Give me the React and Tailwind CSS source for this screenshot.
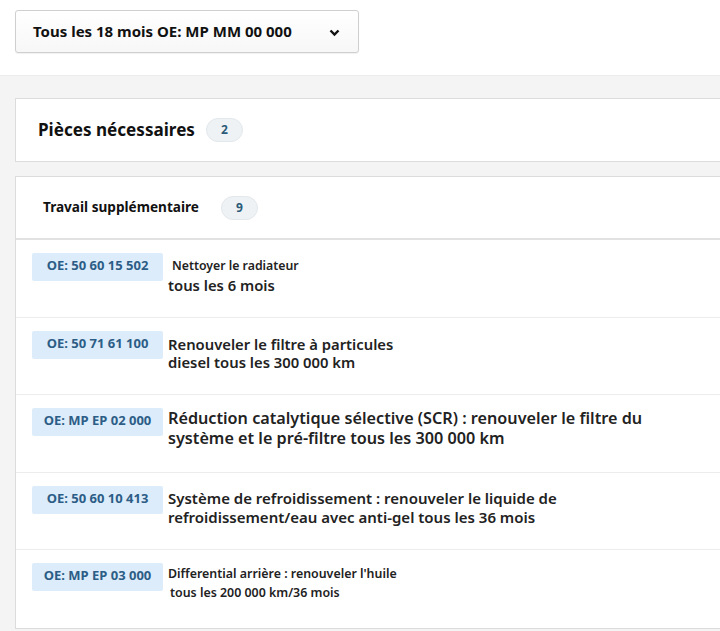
import React from 'react';

const tasks = [
  {
    code: 'OE: 50 60 15 502',
    lines: [
      { text: 'Nettoyer le radiateur', cls: 'text-[12.3px] font-semibold pl-[4px] leading-[18px] pt-[4px]' },
      { text: 'tous les 6 mois', cls: 'text-[14.8px] font-semibold leading-[20px]' },
    ],
  },
  {
    code: 'OE: 50 71 61 100',
    lines: [
      { text: 'Renouveler le filtre à particules', cls: 'text-[14.8px] font-semibold leading-[18px] pt-[4px]' },
      { text: 'diesel tous les 300 000 km', cls: 'text-[14.8px] font-semibold leading-[18px]' },
    ],
  },
  {
    code: 'OE: MP EP 02 000',
    lines: [
      { text: 'Réduction catalytique sélective (SCR) : renouveler le filtre du', cls: 'text-[16.2px] font-semibold leading-[20px]' },
      { text: 'système et le pré-filtre tous les 300 000 km', cls: 'text-[16.2px] font-semibold leading-[20px]' },
    ],
  },
  {
    code: 'OE: 50 60 10 413',
    lines: [
      { text: 'Système de refroidissement : renouveler le liquide de', cls: 'text-[15px] font-semibold leading-[19px] pt-[3px]' },
      { text: 'refroidissement/eau avec anti-gel tous les 36 mois', cls: 'text-[15px] font-semibold leading-[19px]' },
    ],
  },
  {
    code: 'OE: MP EP 03 000',
    lines: [
      { text: 'Differential arrière : renouveler l\'huile', cls: 'text-[12.4px] font-semibold leading-[17px] pt-[2px]' },
      { text: 'tous les 200 000 km/36 mois', cls: 'text-[12.4px] font-semibold leading-[22px] pl-[2px]' },
    ],
  },
];

const CountBadge = ({ n }) => (
  <span className="inline-flex items-center justify-center h-[24px] w-[37px] rounded-full bg-[#eef2f5] border border-[#e3e8ec] text-[12px] font-bold text-[#2c5a78]">
    {n}
  </span>
);

export default function App() {
  return (
    <div
      className="min-h-[631px] bg-white text-[#222]"
      style={{ fontFamily: '"Noto Sans", "Open Sans", sans-serif' }}
    >
      <div className="h-[75px] pt-[10px] pl-[15px]">
        <button className="flex items-center justify-between w-[344px] h-[43px] pl-[17px] pr-[18px] rounded-[3px] border border-[#cfcfcf] bg-gradient-to-b from-white to-[#f7f7f7] shadow-[0_1px_1px_rgba(0,0,0,0.06)]">
          <span className="text-[15px] font-bold text-[#111]">Tous les 18 mois OE: MP MM 00 000</span>
          <svg width="11" height="8" viewBox="0 0 11 8" className="mt-[2px]">
            <path d="M1.5 1.5 L5.5 5.5 L9.5 1.5" fill="none" stroke="#111" strokeWidth="2.4" />
          </svg>
        </button>
      </div>

      <div className="bg-[#f4f4f4] border-t border-[#ececec] pt-[22px] pl-[15px] pb-[4px]">
        <div className="bg-white border border-r-0 border-[#dcdcdc] h-[64px] flex items-center pl-[22px] gap-[11px]">
          <span className="text-[17.1px] font-bold text-[#111]">Pièces nécessaires</span>
          <CountBadge n={2} />
        </div>

        <div className="mt-[14px] bg-white border border-r-0 border-[#dcdcdc]">
          <div className="h-[63px] flex items-center pl-[27px] gap-[22px] border-b-2 border-[#e2e2e2]">
            <span className="text-[13.6px] font-bold text-[#111]">Travail supplémentaire</span>
            <CountBadge n={9} />
          </div>
          {tasks.map((t, i) => (
            <div
              key={t.code}
              className={`h-[77.5px] flex items-start pl-[16px] pt-[13px] gap-[5px] ${i < tasks.length - 1 ? 'border-b border-[#ececec]' : ''}`}
            >
              <span className="shrink-0 w-[131px] h-[28px] pt-[3px] text-center rounded-[2px] bg-[#dcecfa] text-[13px] font-bold text-[#2c5d86]">
                {t.code}
              </span>
              <div className="text-[#222]">
                {t.lines.map((l) => (
                  <div key={l.text} className={l.cls}>{l.text}</div>
                ))}
              </div>
            </div>
          ))}
        </div>
      </div>
    </div>
  );
}
